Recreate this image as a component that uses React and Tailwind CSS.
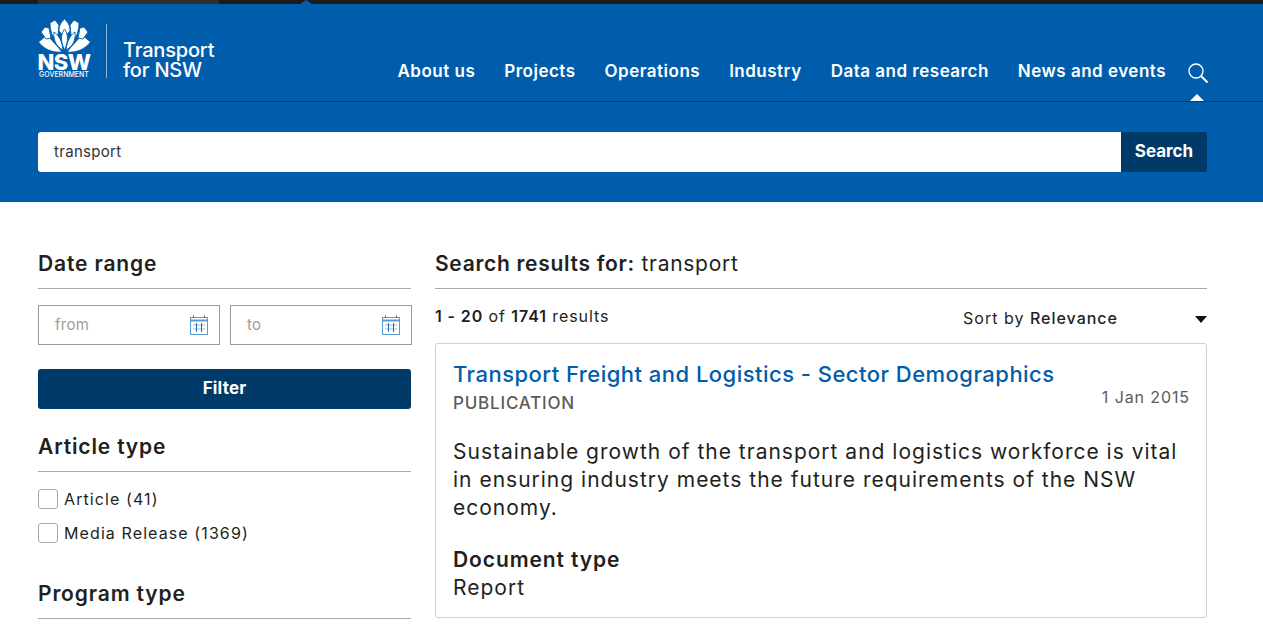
import React from 'react';

const font = { fontFamily: 'Inter, "Open Sans", sans-serif' };
const BLUE = '#005dab';

const Waratah = () => (
    <svg width="53" height="34" viewBox="0 0 53 34" fill="white" stroke={BLUE} strokeWidth="0.9">
        {/* outer bracts */}
        <path d="M0.5 23 L9 16 L20 28 L24 33 C14 34 6 30 0.5 23Z" />
        <path d="M52.5 23 L44 16 L33 28 L29 33 C39 34 47 30 52.5 23Z" />
        <path d="M3 13 L7 8 L11 9 L13 19 L8 20Z" />
        <path d="M50 13 L46 8 L42 9 L40 19 L45 20Z" />
        {/* back petals */}
        <path d="M12 4 L17 1 L21 6 L20 16 L15 18 C13 13 12 9 12 4Z" />
        <path d="M41 4 L36 1 L32 6 L33 16 L38 18 C40 13 41 9 41 4Z" />
        <path d="M26.5 0 C31 4 32 8 32 12 L26.5 18 L21 12 C21 8 22 4 26.5 0Z" />
        {/* tulip centre */}
        <path d="M16 13 C19 15 24 20 25 31 C19 28 15 22 16 13Z" />
        <path d="M37 13 C34 15 29 20 28 31 C34 28 38 22 37 13Z" />
        <path d="M26.5 10 C30 15 31 21 26.5 31 C22 21 23 15 26.5 10Z" />
    </svg>
);

const CalendarIcon = () => (
    <svg width="18" height="20" viewBox="0 0 18 20" fill="none" stroke="#5b9bd5" strokeWidth="1">
        <rect x="0.5" y="2.5" width="17" height="17" />
        <path d="M0.5 5.5 H17.5" strokeWidth="2" />
        <path d="M3 10 H15 M3 14 H15" strokeOpacity="0.7" />
        <path d="M6.5 8 V17 M11.5 8 V17" stroke="#1f6fb5" />
        <path d="M3.5 0.5 V3 M14.5 0.5 V3" stroke="#1f6fb5" />
    </svg>
);

const DateField = ({ label }) => (
    <div className="flex-1 h-10 border border-[#9a9a9a] flex items-center justify-between pl-4 pr-[11px]">
        <span className="text-[15px] leading-5 tracking-[0.3px] text-[#a39c98]">{label}</span>
        <CalendarIcon />
    </div>
);

const CheckRow = ({ label }) => (
    <div className="flex items-center gap-1.5 h-5">
        <span className="w-5 h-5 border border-[#a8a8a8] rounded-[3px] bg-white" />
        <span className="text-[16px] leading-5 text-[#231f20] tracking-[1.1px]">{label}</span>
    </div>
);

const SideHeading = ({ children, className }) => (
    <div className={`border-b border-[#a8a8a8] text-[21px] leading-6 tracking-[0.85px] font-semibold text-[#231f20] ${className}`}>
        {children}
    </div>
);

const App = () => {
    const navItems = ['About us', 'Projects', 'Operations', 'Industry', 'Data and research', 'News and events'];

    return (
        <div className="h-[631px] overflow-hidden bg-white" style={font}>
            <div className="h-[202px] bg-[#005dab] flex flex-col">
                {/* top strip */}
                <div className="h-1 bg-[#1c1c1c] flex shrink-0 relative">
                    <div className="ml-[38px] w-[181px] bg-[#2e2e2e]" />
                    <div className="absolute left-[300px] top-0 w-0 h-0 border-x-[6px] border-x-transparent border-b-[4px] border-b-[#005dab]" />
                </div>

                <div className="h-[98px] shrink-0 border-b border-[#0a3f74] px-[38px] flex relative">
                    <div className="flex pt-[15px]">
                        <div className="w-[52px] flex flex-col items-center text-white">
                            <Waratah />
                            <div className="text-[22px] leading-[17px] font-extrabold tracking-[-0.5px] mt-[1px]">NSW</div>
                            <div className="text-[7px] leading-[6px] font-medium whitespace-nowrap mt-[1px]">GOVERNMENT</div>
                        </div>
                        <div className="w-px h-[54px] bg-[#8db5da] ml-4 mt-[5px]" />
                        <div className="ml-4 mt-[21px] text-white text-[20px] leading-[20px] font-medium tracking-[-0.2px]">
                            <div>Transport</div>
                            <div>for NSW</div>
                        </div>
                    </div>
                    <nav className="ml-auto mr-[17px] flex items-start gap-[29px] pt-[57px] text-white text-[17px] leading-5 tracking-[0.5px] font-semibold">
                        {navItems.map((item) => (
                            <span key={item} className="whitespace-nowrap">{item}</span>
                        ))}
                        <svg className="-ml-[7px] mt-[2px]" width="20" height="20" viewBox="0 0 20 20" fill="none" stroke="white">
                            <circle cx="8" cy="8" r="7" strokeWidth="1.4" />
                            <path d="M13 13 L19.5 19.5" strokeWidth="2" />
                        </svg>
                    </nav>
                    {/* active caret under search */}
                    <div className="absolute right-[59px] bottom-0 w-0 h-0 border-x-[7px] border-x-transparent border-b-[7px] border-b-white" />
                </div>

                <div className="pr-[56px] pl-[38px] pt-[30px] flex">
                    <div className="flex-1 h-10 bg-white rounded-l-[3px] flex items-center pl-4 text-[15px] tracking-[0.3px] text-[#333]">
                        transport
                    </div>
                    <button className="w-[86px] h-10 bg-[#003a68] text-white text-[17px] font-bold rounded-r-[3px]">
                        Search
                    </button>
                </div>
            </div>

            <div className="flex gap-6 pl-[38px] pr-[56px] pt-[50px]">
                <aside className="w-[373px] shrink-0">
                    <SideHeading className="pb-[12px]">Date range</SideHeading>
                    <div className="flex gap-[10px] mt-4 w-[374px]">
                        <DateField label="from" />
                        <DateField label="to" />
                    </div>
                    <button className="w-full h-10 mt-6 bg-[#003a68] text-white text-[17px] tracking-[0.2px] font-bold rounded-[3px]">
                        Filter
                    </button>
                    <SideHeading className="mt-[26px] pb-[12px]">Article type</SideHeading>
                    <div className="flex flex-col gap-[14px] mt-[17px]">
                        <CheckRow label="Article (41)" />
                        <CheckRow label="Media Release (1369)" />
                    </div>
                    <SideHeading className="mt-[39px] pb-[12px]">Program type</SideHeading>
                </aside>

                <main className="flex-1 min-w-0">
                    <div className="border-b border-[#a8a8a8] pb-[12px] text-[21px] leading-6 text-[#231f20] tracking-[0.7px]">
                        <span className="font-semibold">Search results for:</span> transport
                    </div>
                    <div className="flex items-start h-5 mt-[17px] text-[16px] leading-5 text-[#231f20] tracking-[0.9px]">
                        <span>
                            <span className="font-semibold">1 - 20</span> of <span className="font-semibold">1741</span> results
                        </span>
                        <span className="ml-auto mt-[2px] tracking-[1px]">
                            Sort by <span className="font-medium">Relevance</span>
                        </span>
                        <span className="ml-[77px] mt-[10px] w-0 h-0 border-x-[6px] border-x-transparent border-t-[7px] border-t-[#111]" />
                    </div>
                    <div className="mt-[17px] h-[275px] border border-[#d0d0d0] rounded-[3px] px-[17px] pt-[15px]">
                        <div className="text-[22px] leading-[30px] font-medium text-[#005dab] tracking-[0.47px]">
                            Transport Freight and Logistics - Sector Demographics
                        </div>
                        <div className="flex justify-between">
                            <span className="text-[17px] leading-[28px] font-medium text-[#5f5a58] tracking-[0.8px]">PUBLICATION</span>
                            <span className="text-[16px] leading-5 text-[#5f5a58] tracking-[0.9px] -mt-[2px] mr-[-1px]">1 Jan 2015</span>
                        </div>
                        <p className="mt-[21px] text-[21px] leading-[28px] text-[#231f20] tracking-[1px]">
                            Sustainable growth of the transport and logistics workforce is vital in ensuring industry meets the future requirements of the NSW economy.
                        </p>
                        <div className="mt-[24px] text-[21px] leading-[28px] font-semibold text-[#231f20] tracking-[0.9px]">Document type</div>
                        <div className="text-[21px] leading-[28px] text-[#231f20] tracking-[1px]">Report</div>
                    </div>
                </main>
            </div>
        </div>
    );
};

export default App;
